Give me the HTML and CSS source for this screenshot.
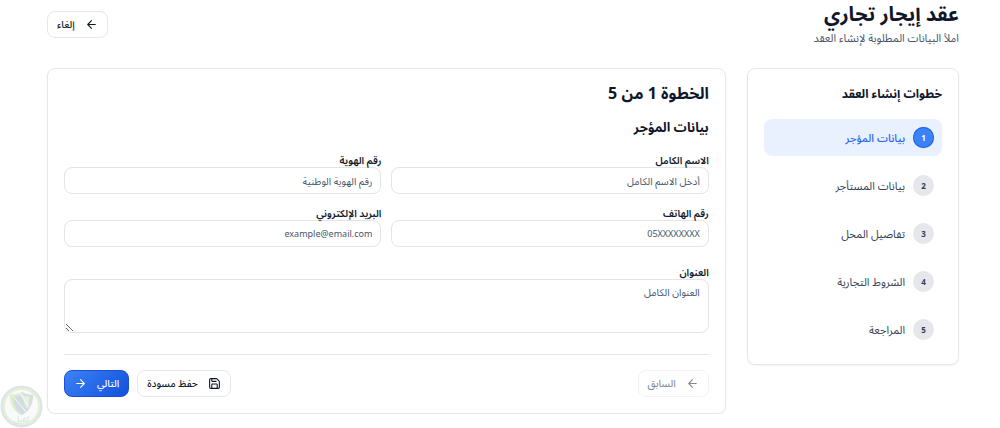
FILE: index.html
```html
<!DOCTYPE html>
<html lang="ar" dir="rtl">
<head>
    <meta charset="UTF-8">
    <meta name="viewport" content="width=device-width, initial-scale=1.0">
    <title>عقد إيجار تجاري</title>
    <link rel="stylesheet" href="styles.css">
</head>
<body>
    <div class="page">
        <header class="page-header">
            <div>
                <h1>عقد إيجار تجاري</h1>
                <p class="subtitle">املأ البيانات المطلوبة لإنشاء العقد</p>
            </div>
            <button type="button" class="btn">
                <svg class="icon" viewBox="0 0 24 24"><path d="m12 19-7-7 7-7M19 12H5"/></svg>
                إلغاء
            </button>
        </header>

        <div class="layout">
            <aside class="card">
                <h2 class="steps-title">خطوات إنشاء العقد</h2>
                <ol class="steps">
                    <li class="step active"><span class="step-number">1</span><span>بيانات المؤجر</span></li>
                    <li class="step"><span class="step-number">2</span><span>بيانات المستأجر</span></li>
                    <li class="step"><span class="step-number">3</span><span>تفاصيل المحل</span></li>
                    <li class="step"><span class="step-number">4</span><span>الشروط التجارية</span></li>
                    <li class="step"><span class="step-number">5</span><span>المراجعة</span></li>
                </ol>
            </aside>

            <main class="card main-card">
                <h2 class="form-title">الخطوة 1 من 5</h2>
                <h3 class="section-title">بيانات المؤجر</h3>
                <form>
                    <div class="fields">
                        <div class="field">
                            <label for="name">الاسم الكامل</label>
                            <input type="text" id="name" placeholder="أدخل الاسم الكامل">
                        </div>
                        <div class="field">
                            <label for="national-id">رقم الهوية</label>
                            <input type="text" id="national-id" placeholder="رقم الهوية الوطنية">
                        </div>
                        <div class="field">
                            <label for="phone">رقم الهاتف</label>
                            <input type="text" id="phone" class="latin" placeholder="05XXXXXXXX">
                        </div>
                        <div class="field">
                            <label for="email">البريد الإلكتروني</label>
                            <input type="email" id="email" class="latin" placeholder="example@email.com">
                        </div>
                    </div>
                    <div class="field">
                        <label for="address">العنوان</label>
                        <textarea id="address" placeholder="العنوان الكامل"></textarea>
                    </div>

                    <div class="actions">
                        <button type="button" class="btn" disabled>
                            <svg class="icon" viewBox="0 0 24 24"><path d="m12 19-7-7 7-7M19 12H5"/></svg>
                            السابق
                        </button>
                        <div class="actions-end">
                            <button type="button" class="btn">
                                <svg class="icon" viewBox="0 0 24 24"><path d="M15.2 3a2 2 0 0 1 1.4.6l3.8 3.8a2 2 0 0 1 .6 1.4V19a2 2 0 0 1-2 2H5a2 2 0 0 1-2-2V5a2 2 0 0 1 2-2z"/><path d="M17 21v-7a1 1 0 0 0-1-1H8a1 1 0 0 0-1 1v7M7 3v4a1 1 0 0 0 1 1h7"/></svg>
                                حفظ مسودة
                            </button>
                            <button type="button" class="btn btn-primary">
                                التالي
                                <svg class="icon" viewBox="0 0 24 24"><path d="M5 12h14M12 5l7 7-7 7"/></svg>
                            </button>
                        </div>
                    </div>
                </form>
            </main>
        </div>
    </div>

    <div class="badge">
        <svg viewBox="0 0 44 44">
            <circle cx="22" cy="22" r="20" fill="#f8fafb" stroke="#dde5ea" stroke-width="3"/>
            <circle cx="22" cy="22" r="18" fill="none" stroke="#e6f1d4" stroke-width="2"/>
            <path d="M10 10q7 0 12-3v24Q10 25 10 10z" fill="#e1eeca"/>
            <path d="M34 10q-7 0-12-3v24q12-6 12-21z" fill="#d5dfe5"/>
            <path d="M13 12q5 0 9-2l7 15q-3 3-7 5-8-5-9-18z" fill="#d2dde3"/>
            <path d="M22 10q4 2 8 2 0 8-3 12z" fill="#e8f2d8"/>
            <path d="m13 11 14 17M20 8l10 15" fill="none" stroke="#f8fafb" stroke-width="1"/>
        </svg>
        <span>كفيل</span>
    </div>
</body>
</html>
```
FILE: styles.css
```css
* {
    box-sizing: border-box;
}

body {
    margin: 0;
    background-color: #fff;
    color: #0f172a;
    font-family: "Noto Sans", "Noto Sans Arabic", sans-serif;
    font-size: 10px;
}

h1, h2, h3, p {
    margin: 0;
}

.page {
    padding: 2px 41px 0 47px;
}

.page-header {
    display: flex;
    align-items: center;
    justify-content: space-between;
    margin-bottom: 22px;
}

h1 {
    margin-bottom: 4px;
    font-size: 20px;
    line-height: 24px;
}

.subtitle {
    color: #475569;
    font-size: 11px;
    line-height: 16px;
}

.layout {
    display: grid;
    grid-template-columns: repeat(4, 1fr);
    gap: 21px;
    align-items: start;
}

.card {
    padding: 16px;
    border: 1px solid #e5e7eb;
    border-radius: 8px;
    box-shadow: 0 1px 2px rgba(0, 0, 0, 0.05);
}

.main-card {
    grid-column: span 3;
}

.steps-title {
    margin-bottom: 16px;
    font-size: 12px;
    line-height: 18px;
}

.steps {
    display: grid;
    gap: 11px;
    margin: 0;
    padding: 0;
    list-style: none;
}

.step {
    display: flex;
    align-items: center;
    gap: 8px;
    padding: 8px;
    border-radius: 8px;
    color: #334155;
    font-size: 11px;
    line-height: 21px;
}

.step-number {
    width: 21px;
    border-radius: 50%;
    background-color: #e5e7eb;
    font-size: 8px;
    font-weight: bold;
    text-align: center;
}

.step.active {
    background-color: #eaf1fe;
    color: #1d66f0;
    font-weight: 500;
}

.active .step-number {
    background-color: #3b82f6;
    box-shadow: inset 0 0 0 1px #2563eb;
    color: #fff;
}

.form-title {
    margin-bottom: 15px;
    font-size: 16px;
    line-height: 16px;
}

.section-title {
    margin-bottom: 15px;
    font-size: 13px;
    line-height: 22px;
}

.fields {
    display: grid;
    grid-template-columns: 1fr 1fr;
    gap: 12px 10px;
    margin-bottom: 18px;
}

label {
    display: block;
    font-weight: 600;
    line-height: 14px;
}

input,
textarea {
    display: block;
    width: 100%;
    height: 27px;
    padding: 0 8px;
    border: 1px solid #e2e4e8;
    border-radius: 8px;
    background-color: #fff;
    color: #0f172a;
    font-family: inherit;
    font-size: 10px;
}

textarea {
    height: 54px;
    padding: 5px 8px;
    line-height: 15px;
    resize: vertical;
}

input::placeholder,
textarea::placeholder {
    color: #475569;
}

.latin {
    font-size: 9px;
}

.actions {
    display: flex;
    justify-content: space-between;
    margin-top: 21px;
    padding-top: 15px;
    border-top: 1px solid #e5e7eb;
}

.actions-end {
    display: flex;
    gap: 8px;
}

.btn {
    display: flex;
    align-items: center;
    gap: 10px;
    height: 27px;
    padding: 0 9px;
    border: 1px solid #e5e7eb;
    border-radius: 8px;
    background-color: #fff;
    color: #0f172a;
    font-family: inherit;
    font-size: 10px;
    font-weight: 500;
    cursor: pointer;
}

.btn:disabled {
    opacity: 0.5;
    cursor: default;
}

.btn-primary {
    border-color: #1d4ed8;
    background: linear-gradient(135deg, #3b82f6, #1251dc);
    color: #fff;
}

.icon {
    width: 13px;
    height: 13px;
    fill: none;
    stroke: currentColor;
    stroke-width: 2;
    stroke-linecap: round;
    stroke-linejoin: round;
}

/* floating badge in the window corner */
.badge {
    position: fixed;
    left: 0;
    bottom: 0;
    width: 43px;
    height: 43px;
}

.badge span {
    position: absolute;
    right: 0;
    bottom: 4px;
    left: 0;
    color: #d2dde3;
    font-size: 8px;
    line-height: 10px;
    text-align: center;
}
```
